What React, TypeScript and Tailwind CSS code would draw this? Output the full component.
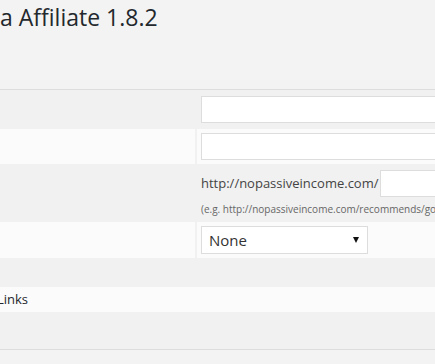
export default function App() {
  return (
    <div
      className="min-h-screen w-[435px] overflow-hidden bg-[#f3f3f3] text-[#444]"
      style={{ fontFamily: '"Open Sans", "Noto Sans", sans-serif' }}
    >
      <div className="h-[90px] border-b border-[#dddddd]">
        <h1 className="pt-[2px] text-[23px] leading-[31px] whitespace-nowrap text-[#23282d]">
          a Affiliate 1.8.2
        </h1>
      </div>

      <div className="grid grid-cols-[195px_1fr] gap-x-[2px] bg-[#f1f1f1]">
        {/* row 1 */}
        <div className="h-[39px] bg-[#f1f1f1]" />
        <div className="h-[39px] overflow-hidden bg-[#f1f1f1] pl-[4px] pt-[6px]">
          <input
            type="text"
            className="block h-[27px] w-[300px] border border-[#dddddd] bg-white outline-none"
          />
        </div>

        {/* row 2 */}
        <div className="h-[35px] bg-[#fbfbfb]" />
        <div className="h-[35px] overflow-hidden bg-[#fbfbfb] pl-[4px] pt-[4px]">
          <input
            type="text"
            className="block h-[27px] w-[300px] border border-[#dddddd] bg-white outline-none"
          />
        </div>

        {/* row 3 */}
        <div className="h-[58px] bg-[#f1f1f1]" />
        <div className="h-[58px] overflow-hidden bg-[#f1f1f1] pl-[4px] pt-[6px]">
          <div className="flex items-center whitespace-nowrap">
            <span className="text-[13px] leading-[27px] text-[#444]">
              http://nopassiveincome.com/
            </span>
            <input
              type="text"
              className="ml-[2px] block h-[27px] w-[200px] shrink-0 border border-[#dddddd] bg-white outline-none"
            />
          </div>
          <div className="mt-[6px] whitespace-nowrap text-[10px] leading-[13px] text-[#666]">
            (e.g. http://nopassiveincome.com/recommends/goodlink)
          </div>
        </div>

        {/* row 4 */}
        <div className="h-[36px] bg-[#fbfbfb]" />
        <div className="h-[36px] overflow-hidden bg-[#fbfbfb] pl-[4px] pt-[4px]">
          <div className="flex h-[28px] w-[167px] items-center justify-between border border-[#dddddd] bg-white pl-[7px] pr-[8px]">
            <span className="text-[15px] text-[#333]">None</span>
            <svg width="6" height="6" viewBox="0 0 6 6">
              <polygon points="0,0 6,0 3,6" fill="#111" />
            </svg>
          </div>
        </div>
      </div>

      <div className="h-[29px] bg-[#f1f1f1]" />
      <div className="flex h-[25px] items-center bg-[#fbfbfb]">
        <span className="-ml-[3px] text-[13px] text-[#23282d]">Links</span>
      </div>
      <div className="h-[38px] border-b border-[#dddddd] bg-[#f1f1f1]" />
    </div>
  );
}
